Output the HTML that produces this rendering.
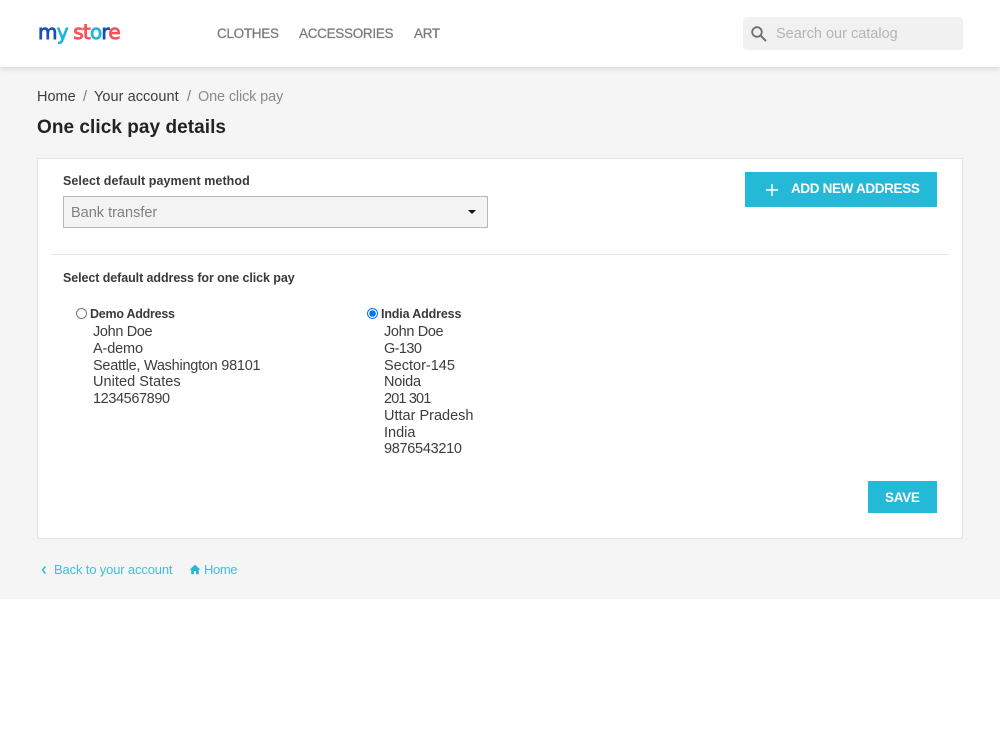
<!DOCTYPE html>
<html lang="en"><head><meta charset="utf-8"><title>One click pay details</title>
<style>
html,body{margin:0;padding:0;background:#fff;width:1000px;height:734px;overflow:hidden}
body{font-family:"Liberation Sans",sans-serif;color:#3d3d3d;position:relative}
.t{position:absolute;white-space:nowrap;line-height:20px;height:20px}
.bg{position:absolute;left:0;top:67px;width:1000px;height:532px;background:#f5f5f5}
header{position:absolute;left:0;top:0;width:1000px;height:67px;background:#fff;box-shadow:0 2px 5px rgba(0,0,0,.11)}
.nav{font-size:13.5px;color:#7a7a7a;top:24px;letter-spacing:-.3px;-webkit-text-stroke:.25px #7a7a7a}
.bc{font-size:14.5px;top:87px}
.card{position:absolute;left:37px;top:158px;width:924px;height:379px;background:#fff;border:1px solid #e4e4e4}
.lb{font-size:12.5px;font-weight:bold;color:#3a3a3a}
.a{font-size:14.5px;color:#3d3d3d}
.btn{position:absolute;background:#24b9d7;color:#fff;font-weight:bold}
.lk{font-size:13px;color:#3fbfdc;top:560px}
input[type=radio]{position:absolute;margin:0;width:11px;height:11px}
</style></head><body>
<div class="bg"></div>
<header>
<div class="t" style="left:38px;top:19px;font:20px/26px 'DejaVu Sans',sans-serif;height:26px;letter-spacing:-.8px;-webkit-text-stroke:.9px"><span style="color:#1c4fb0">m</span><span style="color:#23b4de">y</span> <span style="color:#f2545b">st</span><span style="color:#23b4de">o</span><span style="color:#1c4fb0">r</span><span style="color:#f2545b">e</span></div>
<div class="t nav" style="left:217px">CLOTHES</div>
<div class="t nav" style="left:299px">ACCESSORIES</div>
<div class="t nav" style="left:414px">ART</div>
<div style="position:absolute;left:743px;top:17px;width:220px;height:33px;background:#f1f1f1;border-radius:4px"></div>
<svg style="position:absolute;left:750px;top:25px" width="18" height="18" viewBox="0 0 18 18"><circle cx="7" cy="7" r="4.8" fill="none" stroke="#6f6f6f" stroke-width="1.8"/><path d="M10.5 10.5L16 16" stroke="#6f6f6f" stroke-width="2"/></svg>
<div class="t" style="left:776px;top:24px;font-size:14.5px;color:#b5b5b5">Search our catalog</div>
</header>
<div class="t bc" style="left:37px;color:#3d3d3d">Home</div>
<div class="t bc" style="left:83px;color:#7a7a7a">/</div>
<div class="t bc" style="left:94px;color:#3d3d3d;letter-spacing:.05px">Your account</div>
<div class="t bc" style="left:187px;color:#7a7a7a">/</div>
<div class="t bc" style="left:198px;color:#8a8a8a;letter-spacing:-.15px">One click pay</div>
<div class="t" style="left:37px;top:116px;height:24px;line-height:24px;font-size:19px;font-weight:bold;color:#232323;letter-spacing:.05px">One click pay details</div>
<div class="card"></div>
<div class="t lb" style="left:63px;top:171px;letter-spacing:.07px">Select default payment method</div>
<select disabled style="position:absolute;left:63px;top:196px;width:425px;height:32px;background:#f3f3f3;border:1px solid #b8b8b8;font:14.5px 'Liberation Sans',sans-serif;color:#808080;padding:1px 0 0 7px;box-sizing:border-box;opacity:1;appearance:none;-webkit-appearance:none;border-radius:0"><option>Bank transfer</option></select>
<svg style="position:absolute;left:468px;top:210px" width="8" height="4" viewBox="0 0 8 4"><path d="M0 0H8L4 4Z" fill="#111"/></svg>
<div class="btn" style="left:745px;top:172px;width:192px;height:35px"></div>
<svg style="position:absolute;left:765px;top:183px" width="14" height="14" viewBox="0 0 14 14"><path d="M7 1v12M1 7h12" stroke="#fff" stroke-width="1.5"/></svg>
<div class="t" style="left:791px;top:179px;font-size:13.5px;font-weight:bold;color:#fff;letter-spacing:-.35px">ADD NEW ADDRESS</div>
<div style="position:absolute;left:51px;top:254px;width:898px;height:1px;background:#e8e8e8"></div>
<div class="t lb" style="left:63px;top:268px;letter-spacing:-.08px">Select default address for one click pay</div>
<input type="radio" name="x" style="left:76px;top:308px">
<div class="t lb" style="left:90px;top:304px;letter-spacing:-.25px">Demo Address</div>
<div class="t a" style="left:93px;top:322px;letter-spacing:-.35px">John Doe</div>
<div class="t a" style="left:93px;top:339px;letter-spacing:-.15px">A-demo</div>
<div class="t a" style="left:93px;top:356px;letter-spacing:-.25px">Seattle, Washington 98101</div>
<div class="t a" style="left:93px;top:372px;letter-spacing:.05px">United States</div>
<div class="t a" style="left:93px;top:389px;letter-spacing:-.4px">1234567890</div>
<input type="radio" name="x" checked style="left:367px;top:308px">
<div class="t lb" style="left:381px;top:304px;letter-spacing:-.15px">India Address</div>
<div class="t a" style="left:384px;top:322px;letter-spacing:-.35px">John Doe</div>
<div class="t a" style="left:384px;top:339px;letter-spacing:-.6px">G-130</div>
<div class="t a" style="left:384px;top:356px">Sector-145</div>
<div class="t a" style="left:384px;top:372px;letter-spacing:-.2px">Noida</div>
<div class="t a" style="left:384px;top:389px;letter-spacing:-.85px">201 301</div>
<div class="t a" style="left:384px;top:406px">Uttar Pradesh</div>
<div class="t a" style="left:384px;top:423px">India</div>
<div class="t a" style="left:384px;top:439px;letter-spacing:-.3px">9876543210</div>
<div class="btn" style="left:868px;top:481px;width:69px;height:32px"></div>
<div class="t" style="left:885px;top:488px;font-size:13.5px;font-weight:bold;color:#fff;letter-spacing:-.3px">SAVE</div>
<svg style="position:absolute;left:40px;top:565px" width="8" height="10" viewBox="0 0 8 10"><path d="M5.5 1.5L2.5 5l3 3.5" fill="none" stroke="#24b9d7" stroke-width="1.4"/></svg>
<div class="t lk" style="left:54px;letter-spacing:-.15px">Back to your account</div>
<svg style="position:absolute;left:189px;top:564px" width="12" height="11" viewBox="0 0 12 11"><path d="M6 .6L.6 5.6H2.2V10.2H5V7H7V10.2H9.8V5.6H11.4Z" fill="#24b9d7"/></svg>
<div class="t lk" style="left:204px;letter-spacing:-.4px">Home</div>
</body></html>
